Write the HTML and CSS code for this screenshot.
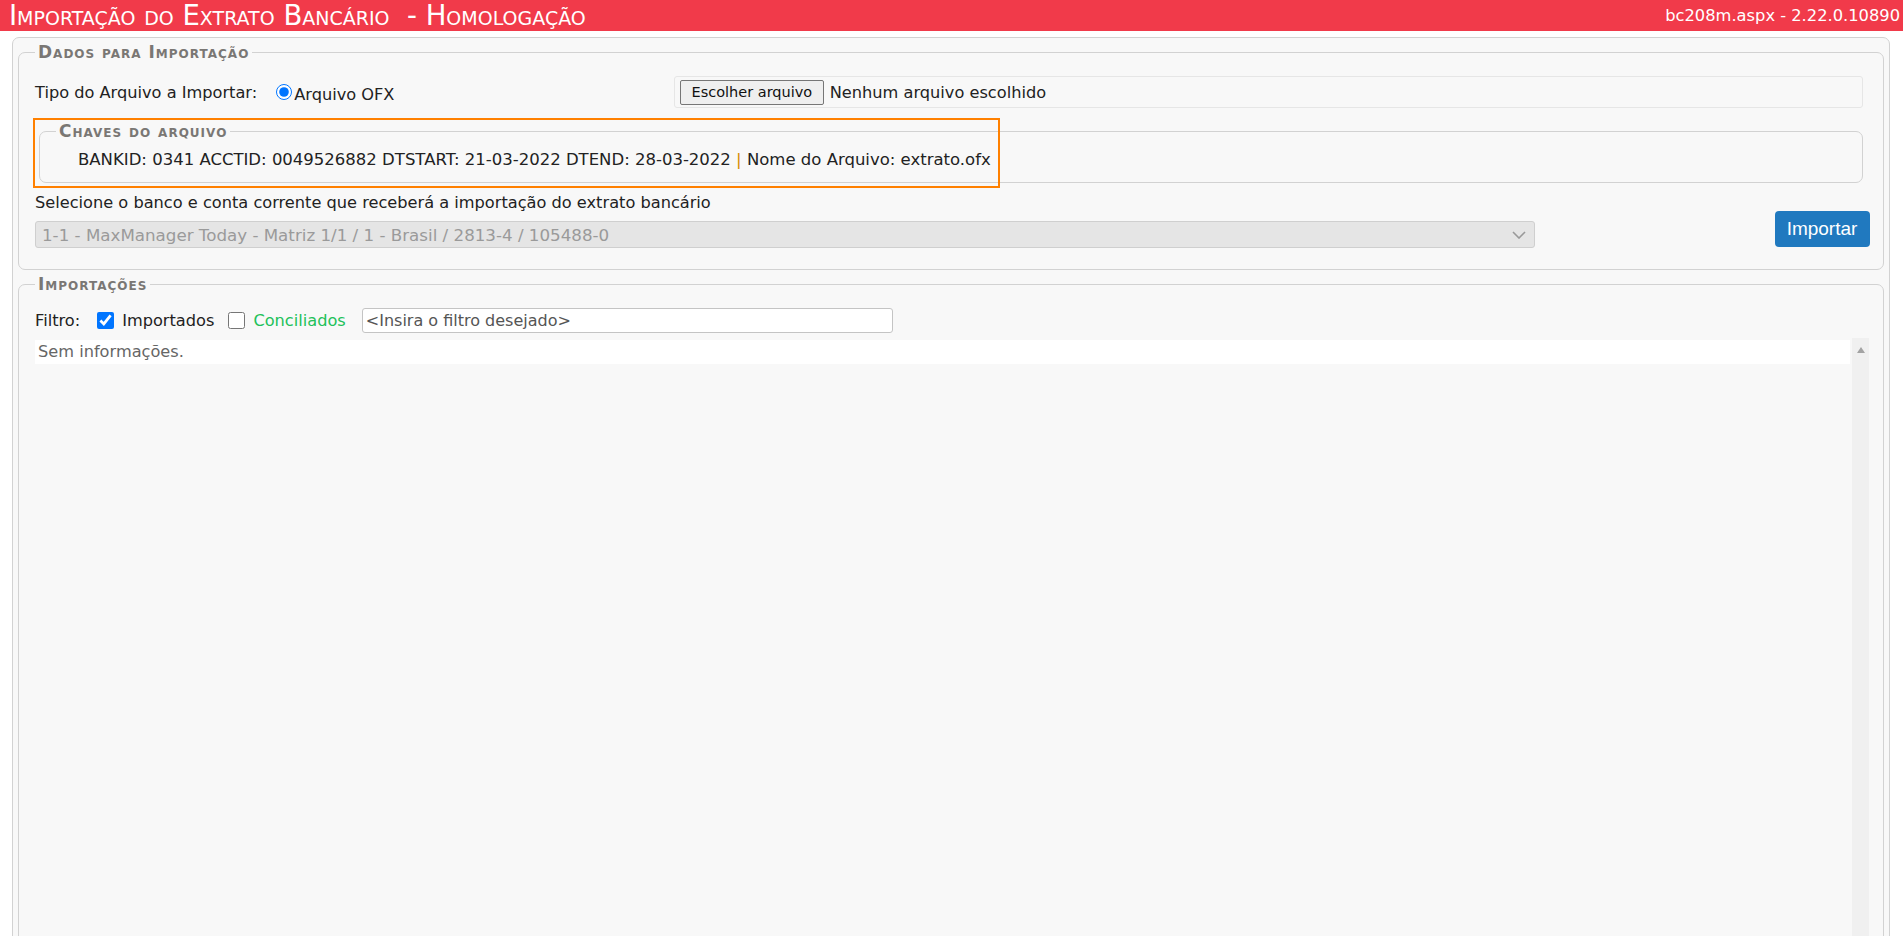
FILE: index.html
```html
<!DOCTYPE html>
<html lang="pt-BR">
<head>
  <meta charset="UTF-8">
  <title>Importação do Extrato Bancário</title>
  <link rel="stylesheet" href="styles.css">
</head>
<body>
  <header class="topbar">
    <h1 class="title">Importação do Extrato Bancário&nbsp; - Homologação</h1>
    <span class="version">bc208m.aspx - 2.22.0.10890</span>
  </header>

  <div class="panel">

    <fieldset class="group">
      <legend>Dados para Importação</legend>

      <div class="row_tipo">
        <span class="lbl">Tipo do Arquivo a Importar:</span>
        <label class="radio"><input type="radio" name="tipo" checked>Arquivo OFX</label>
        <div class="file_box">
          <button type="button" class="file_btn">Escolher arquivo</button>
          <span class="file_name">Nenhum arquivo escolhido</span>
        </div>
      </div>

      <div class="keys_wrap">
        <fieldset class="group keys">
          <legend>Chaves do arquivo</legend>
          <p class="keys_text">BANKID: 0341 ACCTID: 0049526882 DTSTART: 21-03-2022 DTEND: 28-03-2022 <span class="sep">|</span> Nome do Arquivo: extrato.ofx</p>
        </fieldset>
        <div class="mark"></div>
      </div>

      <p class="select_lbl">Selecione o banco e conta corrente que receberá a importação do extrato bancário</p>
      <div class="row_conta">
        <div class="select_box">
          <span>1-1 - MaxManager Today - Matriz 1/1 / 1 - Brasil / 2813-4 / 105488-0</span>
          <svg width="14" height="8" viewBox="0 0 14 8"><path d="M1 1 L7 7 L13 1" fill="none" stroke="#999" stroke-width="1.6"/></svg>
        </div>
        <button type="button" class="btn_importar">Importar</button>
      </div>
    </fieldset>

    <fieldset class="group imports">
      <legend>Importações</legend>

      <div class="row_filtro">
        <span class="lbl">Filtro:</span>
        <label class="check"><input type="checkbox" checked>Importados</label>
        <label class="check verde"><input type="checkbox">Conciliados</label>
        <input type="text" class="filtro" placeholder="<Insira o filtro desejado>">
      </div>

      <div class="lista">
        <div class="lista_body">
          <div class="linha">Sem informações.</div>
        </div>
        <div class="scroll">
          <svg width="8" height="6" viewBox="0 0 8 6"><path d="M4 0 L8 6 L0 6 Z" fill="#a3a3a3"/></svg>
        </div>
      </div>
    </fieldset>

  </div>
</body>
</html>
```

FILE: styles.css
```css
html, body{
  margin: 0;
  padding: 0;
  height: 100%;
  overflow: hidden;
}
body{
  background: #fff;
  font-family: "DejaVu Sans", "Noto Sans", sans-serif;
  font-size: 16.2px;
  color: #222;
}
.topbar{
  display: flex;
  justify-content: space-between;
  align-items: center;
  height: 31px;
  background: #f13a4a;
  color: #fff;
}
.title{
  margin: 0;
  padding-left: 9px;
  font-size: 27.5px;
  font-weight: normal;
  font-variant: small-caps;
  line-height: 31px;
  white-space: pre;
}
.version{
  padding-right: 3px;
  font-size: 16.3px;
}
.panel{
  margin: 6px 13px 0 12px;
  padding: 4px 5px 0 5px;
  height: 1000px;
  background: #f8f8f8;
  border: 1px solid #d2d2d2;
  border-radius: 7px;
}
.group{
  margin: 0;
  padding: 0 15px 21px 16px;
  border: 1px solid #d2d2d2;
  border-radius: 7px;
  background: #f8f8f8;
}
.group legend{
  padding: 0 3px;
  font-weight: bold;
  font-variant: small-caps;
  font-size: 17px;
  letter-spacing: 1px;
  color: #7a7774;
  line-height: 20px;
}
.row_tipo{
  display: flex;
  align-items: center;
  margin-top: 14px;
}
.lbl{
  margin-right: 19px;
}
.radio{
  display: flex;
  align-items: center;
  margin-top: 5px;
}
.radio input{
  margin: 0 2px 5px 0;
  width: 16px;
  height: 16px;
}
.file_box{
  display: flex;
  align-items: center;
  gap: 6px;
  margin-left: auto;
  width: 1182px;
  height: 30px;
  padding-left: 5px;
  border: 1px solid #e6e6e6;
  border-radius: 3px;
  margin-right: 5px;
}
.file_btn{
  height: 25px;
  padding: 0 10.5px;
  font-family: inherit;
  font-size: 14.5px;
  background: #efefef;
  border: 1px solid #767676;
  border-radius: 2px;
  color: #111;
}
.keys_wrap{
  position: relative;
  margin: 13px 5px 0 4px;
}
.keys{
  padding-bottom: 12px;
}
.keys_text{
  margin: 9px 0 0 22px;
  font-size: 16.5px;
  line-height: 20px;
}
.sep{
  color: #d68a00;
}
.mark{
  position: absolute;
  left: -6px;
  top: -3px;
  width: 963px;
  height: 66px;
  border: 2px solid #ff8000;
}
.select_lbl{
  margin: 10px 0 0 0;
  line-height: 20px;
}
.row_conta{
  display: flex;
  justify-content: space-between;
  align-items: flex-start;
  margin-right: -1.5px;
}
.select_box{
  display: flex;
  justify-content: space-between;
  align-items: center;
  box-sizing: border-box;
  margin-top: 8px;
  width: 1500px;
  height: 27px;
  padding: 0 8px 0 6px;
  background: #e5e5e5;
  border: 1px solid #cfcfcf;
  border-radius: 3px;
  color: #9a9a9a;
  font-size: 16.7px;
}
.btn_importar{
  margin-top: -2px;
  height: 36px;
  width: 95px;
  padding: 0;
  background: #2079bf;
  border: none;
  border-radius: 4px;
  color: #fff;
  font-family: "Liberation Sans", Arial, sans-serif;
  font-size: 19px;
}
.imports{
  margin-top: 4px;
  height: 1000px;
}
.row_filtro{
  display: flex;
  align-items: center;
  margin-top: 14px;
}
.row_filtro .lbl{
  margin-right: 17px;
}
.check{
  display: flex;
  align-items: center;
  margin-right: 14px;
}
.check input{
  margin: 0 8px 0 0;
  width: 17px;
  height: 17px;
}
.verde{
  margin-right: 16px;
  color: #22c15a;
}
.filtro{
  box-sizing: border-box;
  width: 531px;
  height: 25px;
  padding: 0 3px;
  font-family: inherit;
  font-size: 16px;
  border: 1px solid #c4c4c4;
  border-radius: 3px;
  background: #fff;
}
.filtro::placeholder{
  color: #555;
}
.lista{
  display: flex;
  margin-top: 5px;
  height: 700px;
  margin-right: -1px;
}
.lista_body{
  flex: 1;
  padding-top: 2px;
}
.linha{
  height: 24px;
  padding-left: 3px;
  line-height: 24px;
  background: #fff;
  color: #666;
}
.scroll{
  width: 17px;
  margin-left: 2px;
  background: #f0f0f0;
  text-align: center;
}
.scroll svg{
  margin-top: 6px;
}
```
